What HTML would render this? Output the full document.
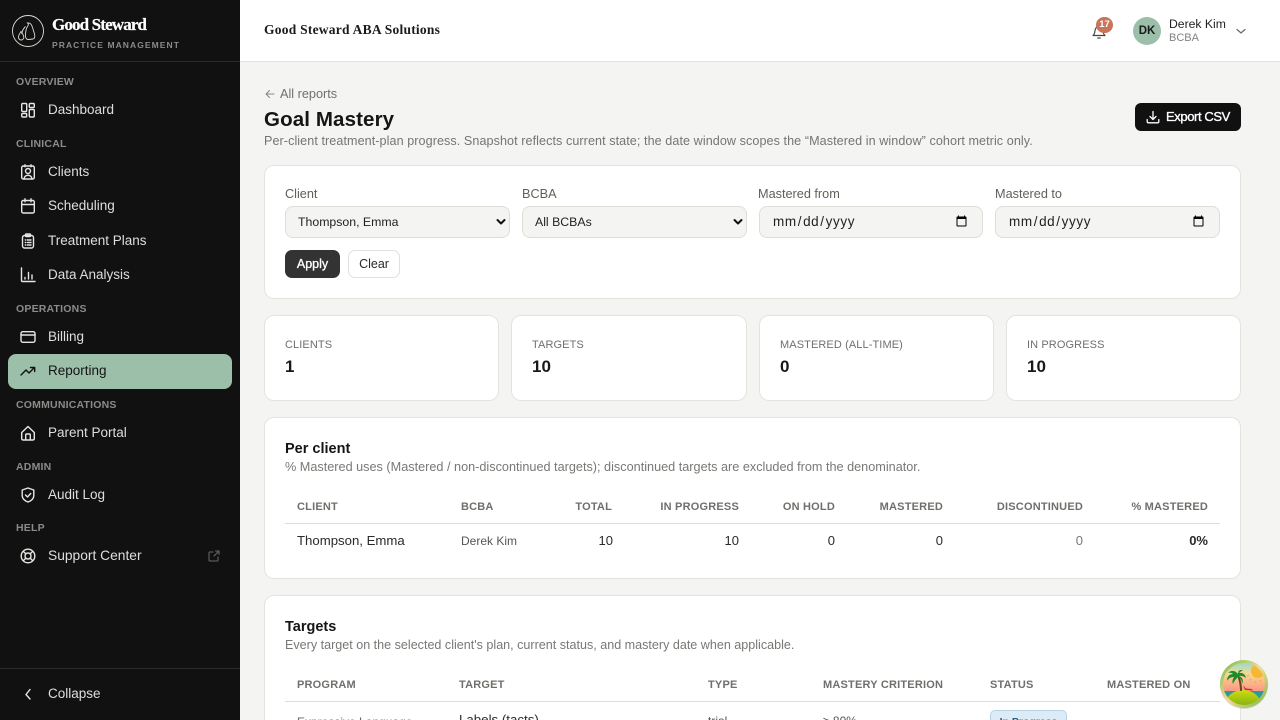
<!DOCTYPE html>
<html lang="en"><head><meta charset="utf-8"><title>Goal Mastery</title>
<style>
*{box-sizing:border-box;margin:0;padding:0}
html,body{width:1280px;height:720px;overflow:hidden;background:#f4f4f2;font-family:"Liberation Sans",sans-serif}
#app{position:fixed;left:0;top:0;width:1280px;height:720px;overflow:hidden;background:#f4f4f2}
.t{position:absolute;white-space:nowrap;line-height:20px;height:20px}
.r{text-align:right}
.box{position:absolute}
.card{position:absolute;background:#fff;border:1px solid #e3e3e0;border-radius:10px}
.sec{font-size:10.5px;font-weight:bold;color:#8b8b88;letter-spacing:.2px;left:16px}
.nav{font-size:13.5px;color:#dedfdc;left:48px;margin-top:1px}
.ic{position:absolute;left:20px;width:16px;height:16px;fill:none;stroke:#e6e6e3;stroke-width:1.4;stroke-linecap:round;stroke-linejoin:round}
.lab{font-size:12.7px;color:#5f5f5c}
.th{font-size:11px;font-weight:bold;color:#6f6f6c;letter-spacing:.2px}
.sl{font-size:11px;color:#6f6f6c;letter-spacing:.1px;margin-top:1px}
.sv{font-size:17px;font-weight:bold;color:#191919}
.h2{font-size:14.5px;font-weight:bold;color:#151515}
.sub{font-size:12.6px;color:#787875}
.td{font-size:13px;color:#2a2a2a}
select,input{position:absolute;height:32px;background:#f4f4f2;border:1px solid #deded9;border-radius:8px;color:#222;font-family:"Liberation Sans",sans-serif}
select{appearance:none;-webkit-appearance:none;font-size:12.3px;padding-left:12px;top:206px}
input{font-size:13.5px;padding:0 12px 1px;top:206px;letter-spacing:.6px}
</style></head><body><div id="app">

<div class="box" style="left:0;top:0;width:240px;height:720px;background:#111"></div>
<div class="box" style="left:0;top:61px;width:240px;height:1px;background:#2b2b2b"></div>
<div class="box" style="left:0;top:668px;width:240px;height:1px;background:#2b2b2b"></div>

<svg class="box" style="left:12px;top:15px" width="32" height="32" viewBox="0 0 32 32" fill="none" stroke="#dcdcd8" stroke-width=".9"><circle cx="16" cy="16" r="15.500"/><path d="M13.500 21c0-4 .7-8 2.300-10 .8-.9.7-2.200-.3-3 2.500-.2 4.300 1.500 5 4.500l2 6.500c.6 2.500.3 4.500-1.500 5l-4.500.5c-2 0-3-1.200-3-3.500z"/><path d="M6.500 22c0-2 1.300-3.500 2.500-5.500.5 1 2.800 3.500 2.800 5.500 0 1.800-1.200 3-2.700 3-1.600 0-2.600-1.200-2.600-3z"/><path d="M13.500 11.500c-2.500 2.500-3.500 5-3.700 7.500"/></svg>
<div class="t" style="left:52px;top:15px;font:bold 17px/20px 'Liberation Serif',serif;color:#fff;letter-spacing:-.85px;-webkit-text-stroke:.2px #fff">Good Steward</div>
<div class="t" style="left:52px;top:35px;font-size:8.5px;font-weight:bold;color:#8a8a86;letter-spacing:1.07px">PRACTICE MANAGEMENT</div>

<div class="t sec" style="top:72px">OVERVIEW</div>
<svg class="ic" style="top:102px" viewBox="0 0 16 16"><rect x="1.700" y="1.500" width="5" height="8" rx="1"/><rect x="9.300" y="1.500" width="5" height="4" rx="1"/><rect x="1.700" y="11.500" width="5" height="3.500" rx="1"/><rect x="9.300" y="7.500" width="5" height="7.500" rx="1"/></svg>
<div class="t nav" style="top:99px">Dashboard</div>

<div class="t sec" style="top:134px">CLINICAL</div>
<svg class="ic" style="top:164px" viewBox="0 0 16 16"><rect x="1.700" y="2" width="12.600" height="13" rx="1.500"/><path d="M5 .8v2M11 .8v2"/><circle cx="8" cy="7" r="2.500"/><path d="M4 15c.3-2.500 2-3.700 4-3.700s3.700 1.200 4 3.700"/></svg>
<div class="t nav" style="top:161px">Clients</div>
<svg class="ic" style="top:198px" viewBox="0 0 16 16"><rect x="1.700" y="2.500" width="12.600" height="12.500" rx="1.500"/><path d="M1.700 6.500h12.600M5 .8v3M11 .8v3"/></svg>
<div class="t nav" style="top:195px">Scheduling</div>
<svg class="ic" style="top:233px" viewBox="0 0 16 16"><rect x="2.500" y="2.500" width="11" height="12.500" rx="2"/><rect x="5.500" y="1" width="5" height="2.500" rx=".8"/><path d="M5.300 7h.5M7.500 7h3.500M5.300 9.500h.5M7.500 9.500h3.500M5.300 12h.5M7.500 12h3.500"/></svg>
<div class="t nav" style="top:230px">Treatment Plans</div>
<svg class="ic" style="top:267px" viewBox="0 0 16 16"><path d="M1.500 1v12.500q0 1 1 1h12.500M5 10.500v1.500M8.500 5.500v6.500M12 8v4"/></svg>
<div class="t nav" style="top:264px">Data Analysis</div>

<div class="t sec" style="top:299px">OPERATIONS</div>
<svg class="ic" style="top:329px" viewBox="0 0 16 16"><rect x="1" y="2.700" width="14" height="10.600" rx="1.800"/><path d="M1 6h14"/></svg>
<div class="t nav" style="top:326px">Billing</div>

<div class="box" style="left:8px;top:354px;width:224px;height:35px;background:#9cbfa9;border-radius:8px"></div>
<svg class="ic" style="top:363px;stroke:#111" viewBox="0 0 16 16"><path d="M1 12l5-5 3 3 5.500-5.500M10.500 4.500h4.200v4"/></svg>
<div class="t nav" style="top:360px;color:#141414">Reporting</div>

<div class="t sec" style="top:395px">COMMUNICATIONS</div>
<svg class="ic" style="top:425px" viewBox="0 0 16 16"><path d="M1.700 7.500L8 1.500l6.300 6V13.500q0 1.500-1.500 1.500H3.200q-1.500 0-1.500-1.500zM5.700 15v-5q0-1 1-1h2.600q1 0 1 1v5"/></svg>
<div class="t nav" style="top:422px">Parent Portal</div>

<div class="t sec" style="top:457px">ADMIN</div>
<svg class="ic" style="top:487px" viewBox="0 0 16 16"><path d="M8 1l5.800 2v5.500c0 3-2.500 5.500-5.800 6.500-3.300-1-5.800-3.500-5.800-6.500V3zM5.500 8l2 2 3.200-3.500"/></svg>
<div class="t nav" style="top:484px">Audit Log</div>

<div class="t sec" style="top:518px">HELP</div>
<svg class="ic" style="top:548px" viewBox="0 0 16 16"><circle cx="8" cy="8" r="6.800"/><circle cx="8" cy="8" r="3"/><path d="M3.200 3.200l2.700 2.700M12.800 3.200l-2.700 2.700M3.200 12.800l2.700-2.700M12.800 12.800l-2.700-2.700"/></svg>
<div class="t nav" style="top:545px;font-size:13.800px">Support Center</div>
<svg class="ic" style="left:208px;top:550px;width:12px;height:12px;stroke:#6b6b6b;stroke-width:1" viewBox="0 0 12 12"><path d="M5 2H2q-1 0-1 1v7q0 1 1 1h7q1 0 1-1V7M6 6l5-5M7.500 1H11v3.500"/></svg>

<svg class="ic" style="top:686px" viewBox="0 0 16 16"><path d="M10 3.500L6 8.500l4 4.500"/></svg>
<div class="t nav" style="top:683px">Collapse</div>

<div class="box" style="left:240px;top:0;width:1040px;height:62px;background:#fff;border-bottom:1px solid #e2e2df"></div>
<div class="t" style="left:264px;top:20px;font:bold 13.500px/20px 'Liberation Serif',serif;color:#1b1b1b;letter-spacing:.24px">Good Steward ABA Solutions</div>
<svg class="box" style="left:1091px;top:23px" width="16" height="16" viewBox="0 0 16 16" fill="none" stroke="#444" stroke-width="1.200" stroke-linecap="round" stroke-linejoin="round"><path d="M2 12.500c1.500-1 1.800-3 2-5s2-4.500 4-4.500 3.800 2.500 4 4.500.5 4 2 5zM6.800 15h2.400"/></svg>
<div class="box" style="left:1096px;top:17px;width:17px;height:16px;border-radius:9px;background:#c8755b;color:#fff;font:bold 9.500px/16px 'Liberation Sans',sans-serif;text-align:center">17</div>
<div class="box" style="left:1133px;top:17px;width:28px;height:28px;border-radius:50%;background:#9cbfa9;color:#1a1a1a;font:bold 11.500px/28px 'Liberation Sans',sans-serif;text-align:center">DK</div>
<div class="t" style="left:1169px;top:14px;font-size:12.200px;color:#222">Derek Kim</div>
<div class="t" style="left:1169px;top:28px;font-size:11px;color:#82827f">BCBA</div>
<svg class="box" style="left:1235px;top:25px" width="12" height="12" viewBox="0 0 12 12" fill="none" stroke="#666" stroke-width="1.200" stroke-linecap="round"><path d="M2 4.500l4 3.500 4-3.500"/></svg>

<svg class="box" style="left:265px;top:89px" width="10" height="10" viewBox="0 0 10 10" fill="none" stroke="#8a8a87" stroke-width="1.100" stroke-linecap="round" stroke-linejoin="round"><path d="M9 5H1.200M4.500 1.500L1 5l3.500 3.500"/></svg>
<div class="t" style="left:280px;top:84px;font-size:12.700px;color:#70706d">All reports</div>
<div class="t" style="left:264px;top:110px;font-size:20.500px;font-weight:bold;color:#151515;letter-spacing:.12px">Goal Mastery</div>
<div class="t" style="left:264px;top:131px;font-size:12.600px;color:#757572;letter-spacing:.07px">Per-client treatment-plan progress. Snapshot reflects current state; the date window scopes the “Mastered in window” cohort metric only.</div>

<div class="box" style="left:1135px;top:103px;width:106px;height:28px;border-radius:6px;background:#111"></div>
<svg class="box" style="left:1146px;top:110px" width="14" height="14" viewBox="0 0 14 14" fill="none" stroke="#fff" stroke-width="1.300" stroke-linecap="round" stroke-linejoin="round"><path d="M7 1.500v7.500M4 6.500L7 9.500l3-3M1.200 9.500v2q0 1.300 1.300 1.300h9q1.300 0 1.300-1.300v-2"/></svg>
<div class="t" style="left:1166px;top:107px;font-size:13px;color:#fff;letter-spacing:-.4px;-webkit-text-stroke:.35px #fff">Export CSV</div>

<div class="card" style="left:264px;top:165px;width:977px;height:134px"></div>
<div class="t lab" style="left:285px;top:184px">Client</div>
<div class="t lab" style="left:522px;top:184px">BCBA</div>
<div class="t lab" style="left:758px;top:184px">Mastered from</div>
<div class="t lab" style="left:995px;top:184px">Mastered to</div>
<select style="left:285px;width:225px"><option>Thompson, Emma</option></select>
<select style="left:522px;width:225px"><option>All BCBAs</option></select>
<svg class="box" style="left:495px;top:217px;pointer-events:none" width="12" height="10" viewBox="0 0 12 10" fill="none" stroke="#111" stroke-width="2" stroke-linecap="round" stroke-linejoin="round"><path d="M2.500 3l3.500 3.500L9.500 3"/></svg>
<svg class="box" style="left:732px;top:217px;pointer-events:none" width="12" height="10" viewBox="0 0 12 10" fill="none" stroke="#111" stroke-width="2" stroke-linecap="round" stroke-linejoin="round"><path d="M2.500 3l3.500 3.500L9.500 3"/></svg>
<input type="date" style="left:759px;width:224px">
<input type="date" style="left:995px;width:225px">
<div class="box" style="left:285px;top:250px;width:55px;height:28px;border-radius:7px;background:#333;color:#fff;font:12.500px/28px 'Liberation Sans',sans-serif;text-align:center;-webkit-text-stroke:.3px #fff">Apply</div>
<div class="box" style="left:348px;top:250px;width:52px;height:28px;border-radius:7px;background:#fff;border:1px solid #e0e0dc;color:#2a2a2a;font:12.500px/26px 'Liberation Sans',sans-serif;text-align:center">Clear</div>

<div class="card" style="left:264px;top:315px;width:235px;height:86px"></div>
<div class="card" style="left:511px;top:315px;width:236px;height:86px"></div>
<div class="card" style="left:759px;top:315px;width:235px;height:86px"></div>
<div class="card" style="left:1006px;top:315px;width:235px;height:86px"></div>
<div class="t sl" style="left:285px;top:334px">CLIENTS</div><div class="t sv" style="left:285px;top:357px">1</div>
<div class="t sl" style="left:532px;top:334px">TARGETS</div><div class="t sv" style="left:532px;top:357px">10</div>
<div class="t sl" style="left:780px;top:334px">MASTERED (ALL-TIME)</div><div class="t sv" style="left:780px;top:357px">0</div>
<div class="t sl" style="left:1027px;top:334px">IN PROGRESS</div><div class="t sv" style="left:1027px;top:357px">10</div>

<div class="card" style="left:264px;top:417px;width:977px;height:162px"></div>
<div class="t h2" style="left:285px;top:439px">Per client</div>
<div class="t sub" style="left:285px;top:457px;font-size:12.680px">% Mastered uses (Mastered / non-discontinued targets); discontinued targets are excluded from the denominator.</div>
<div class="t th" style="left:297px;top:497px">CLIENT</div>
<div class="t th" style="left:461px;top:497px">BCBA</div>
<div class="t th r" style="left:512px;width:100px;top:497px">TOTAL</div>
<div class="t th r" style="left:619px;width:120px;top:497px">IN PROGRESS</div>
<div class="t th r" style="left:735px;width:100px;top:497px">ON HOLD</div>
<div class="t th r" style="left:843px;width:100px;top:497px">MASTERED</div>
<div class="t th r" style="left:963px;width:120px;top:497px">DISCONTINUED</div>
<div class="t th r" style="left:1088px;width:120px;top:497px">% MASTERED</div>
<div class="box" style="left:285px;top:523px;width:935px;height:1px;background:#dededb"></div>
<div class="t td" style="left:297px;top:531px;font-size:13.200px">Thompson, Emma</div>
<div class="t td" style="left:461px;top:531px;font-size:12px;color:#555">Derek Kim</div>
<div class="t td r" style="left:513px;width:100px;top:531px">10</div>
<div class="t td r" style="left:639px;width:100px;top:531px">10</div>
<div class="t td r" style="left:735px;width:100px;top:531px">0</div>
<div class="t td r" style="left:843px;width:100px;top:531px">0</div>
<div class="t td r" style="left:983px;width:100px;top:531px;color:#777">0</div>
<div class="t td r" style="left:1108px;width:100px;top:531px;font-weight:bold">0%</div>

<div class="card" style="left:264px;top:595px;width:977px;height:140px"></div>
<div class="t h2" style="left:285px;top:617px">Targets</div>
<div class="t sub" style="left:285px;top:635px;font-size:12.570px">Every target on the selected client's plan, current status, and mastery date when applicable.</div>
<div class="t th" style="left:297px;top:675px">PROGRAM</div>
<div class="t th" style="left:459px;top:675px">TARGET</div>
<div class="t th" style="left:708px;top:675px">TYPE</div>
<div class="t th" style="left:823px;top:675px">MASTERY CRITERION</div>
<div class="t th" style="left:990px;top:675px">STATUS</div>
<div class="t th" style="left:1107px;top:675px">MASTERED ON</div>
<div class="box" style="left:285px;top:701px;width:935px;height:1px;background:#dededb"></div>
<div class="t" style="left:297px;top:712px;font-size:12px;color:#666">Expressive Language</div>
<div class="t td" style="left:459px;top:710px;font-size:13.300px">Labels (tacts)</div>
<div class="t" style="left:708px;top:711px;font-size:12px;color:#555">trial</div>
<div class="t" style="left:823px;top:711px;font-size:12px;color:#555">≥ 80%</div>
<div class="box" style="left:990px;top:710px;width:77px;height:24px;border:1px solid #b9d3e6;border-radius:5px;background:#dcebf5;color:#2a5a7d;font:bold 10.500px/22px 'Liberation Sans',sans-serif;text-align:center">In Progress</div>

<svg class="box" style="left:1218px;top:658px" width="52" height="52" viewBox="0 0 52 52">
<defs>
<linearGradient id="sky" x1="0" y1="0" x2="0" y2="1"><stop offset=".08" stop-color="#8fdcd0"/><stop offset=".3" stop-color="#f8d890"/><stop offset=".62" stop-color="#fb9a86"/></linearGradient>
<linearGradient id="rim" x1="0" y1="0" x2="1" y2="1"><stop offset="0" stop-color="#72bb3e"/><stop offset=".5" stop-color="#f0dc9a"/><stop offset="1" stop-color="#74b63a"/></linearGradient>
<linearGradient id="isl" x1="0" y1="0" x2="0" y2="1"><stop offset="0" stop-color="#cfdc12"/><stop offset="1" stop-color="#3f8c10"/></linearGradient>
<clipPath id="c"><circle cx="26" cy="26" r="21"/></clipPath>
</defs>
<circle cx="26" cy="27" r="24" fill="#000" opacity=".12"/>
<circle cx="26" cy="26" r="24" fill="url(#rim)"/>
<g clip-path="url(#c)">
<rect x="0" y="0" width="52" height="52" fill="url(#sky)"/>
<circle cx="40" cy="13" r="7" fill="#f7b733"/>
<path d="M31 17l-2 1M33 21l-1.500 1.500M37 23v2M42 22l1 1.500" stroke="#f0a020" stroke-width=".8"/>
<rect x="0" y="33" width="52" height="7" fill="#2a9a9e"/>
<ellipse cx="25" cy="47" rx="18" ry="15" fill="url(#isl)"/>
<path d="M25 27.500l3 3 6 .5 1 1.500-8-.5z" fill="#c83040"/>
<path d="M22 33c0-6-1-10-3-16l1.500-.3c2.500 5 3.500 10 3.500 16z" fill="#6a4323"/>
<path d="M20 16c-3-4-7-4-10-1 3-.5 4 0 5 1-3 0-6 2-6 7 2-3 4-4 7-4-1.500 2-2 5-1 7 1-3 3-5 5-7 2 1 4 3 4 7 2-4 0-7-3-8 3-.5 5 .5 7 2-.5-4-4-5.500-7-5 1-1 2-2 4-2.500-3-1.500-5 .5-5 3.500z" fill="#1f8a2c"/>
</g>
</svg>
</div></body></html>
